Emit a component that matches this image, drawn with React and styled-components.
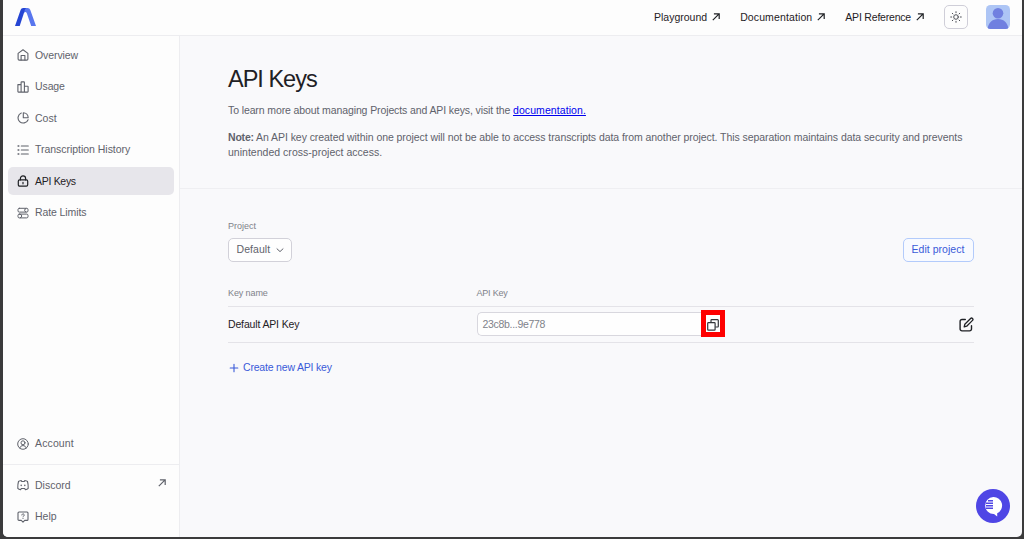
import React from "react";
import styled, { createGlobalStyle } from "styled-components";

const Global = createGlobalStyle`
  *, *::before, *::after { box-sizing: border-box; }
  html, body, #root { height: 100%; }
  body {
    margin: 0;
    overflow: hidden;
    background: #3b3b3c;
    font-family: "Liberation Sans", Arial, sans-serif;
    font-size: 10.5px;
    color: #1f2125;
  }
`;

const Window = styled.div`
  width: 1019.5px;
  height: 537px;
  margin-left: 2.5px;
  display: flex;
  flex-direction: column;
  background: #f9f9fb;
  border-radius: 0 0 5px 5px;
  overflow: hidden;
`;

const Header = styled.header`
  flex: none;
  height: 36px;
  padding: 0 12px 1px 12px;
  display: flex;
  align-items: center;
  background: #fdfdfd;
  border-bottom: 1px solid #ededf0;
`;

const HeaderNav = styled.nav`
  margin-left: auto;
  display: flex;
  align-items: center;
  gap: 20px;
`;

const HeaderLink = styled.a`
  display: flex;
  align-items: center;
  gap: 5px;
  white-space: nowrap;
  letter-spacing: ${(p) => p.$track || 0}px;
  color: #1f2125;
`;

const ThemeButton = styled.button`
  width: 24px;
  height: 24px;
  margin-left: 20px;
  padding: 0;
  display: grid;
  place-items: center;
  background: #fdfdfd;
  border: 1px solid #cfced8;
  border-radius: 5px;
`;

const Avatar = styled.div`
  width: 24px;
  height: 24px;
  margin-left: 18px;
  border-radius: 4.5px;
  overflow: hidden;
  background: #adc5f5;
  svg { display: block; }
`;

const Body = styled.div`
  flex: 1;
  min-height: 0;
  display: flex;
`;

const Sidebar = styled.aside`
  flex: none;
  width: 177.5px;
  display: flex;
  flex-direction: column;
  background: #fdfdfd;
  border-right: 1px solid #ededf0;
`;

const NavGroup = styled.div`
  display: flex;
  flex-direction: column;
  gap: 3.5px;
  padding: ${(p) => p.$pad};
  border-top: ${(p) => (p.$divided ? "1px solid #ededf0" : "0")};
`;

const Spacer = styled.div`
  flex: 1;
`;

const NavItem = styled.a`
  height: 28px;
  padding: 0 8px 1px 8.5px;
  display: flex;
  align-items: center;
  border-radius: 5px;
  white-space: nowrap;
  letter-spacing: ${(p) => p.$track || 0}px;
  color: ${(p) => (p.$active ? "#1f2125" : "#5f626b")};
  background: ${(p) => (p.$active ? "#e7e6eb" : "transparent")};
  > svg:first-child { flex: none; margin: 1px 6.5px 0 0; }
  > svg:last-child { margin-left: auto; margin-bottom: 4px; }
`;

const Main = styled.main`
  flex: 1;
  min-width: 0;
`;

const Intro = styled.section`
  height: 153px;
  padding: 28px 48px 0;
  border-bottom: 1px solid #efeff2;
`;

const Title = styled.h1`
  margin: 0;
  font-size: 23.5px;
  line-height: 30px;
  font-weight: 400;
  letter-spacing: -1px;
`;

const Para = styled.p`
  margin: ${(p) => p.$top}px 0 0;
  line-height: 15px;
  white-space: nowrap;
  color: #5f626b;
`;

const Run = styled.span`
  letter-spacing: ${(p) => p.$track}px;
`;

const DocLink = styled.a`
  color: #0000ee;
  text-decoration: underline;
  letter-spacing: ${(p) => p.$track}px;
`;

const Content = styled.section`
  padding: 31px 48px 0;
`;

const Label = styled.div`
  font-size: 9px;
  line-height: 12px;
  color: #80828a;
  letter-spacing: ${(p) => p.$track || 0}px;
`;

const ProjectRow = styled.div`
  margin-top: 5.5px;
  display: flex;
  justify-content: space-between;
`;

const Button = styled.button`
  height: 24.5px;
  width: ${(p) => p.$w}px;
  padding: 0 7.5px 1px;
  display: flex;
  align-items: center;
  justify-content: space-between;
  white-space: nowrap;
  font: inherit;
  letter-spacing: ${(p) => p.$track || 0}px;
  border-radius: 5px;
  border: 1px solid ${(p) => (p.$primary ? "#b3cbfb" : "#d2d1d9")};
  background: ${(p) => (p.$primary ? "#f8faff" : "#fefefe")};
  color: ${(p) => (p.$primary ? "#3a5bd9" : "#5f626b")};
  svg { margin-top: 2px; }
`;

const TableRow = styled.div`
  display: grid;
  grid-template-columns: 248.5px 1fr auto;
  align-items: ${(p) => (p.$head ? "end" : "center")};
  height: ${(p) => p.$h}px;
  padding-bottom: ${(p) => (p.$head ? 6.6 : 0)}px;
  border-bottom: 1px solid #e4e3e8;
`;

const KeyName = styled.span`
  letter-spacing: ${(p) => p.$track}px;
`;

const KeyCell = styled.div`
  display: flex;
  align-items: center;
`;

const KeyField = styled.div`
  width: 225px;
  height: 24px;
  padding-left: 5px;
  display: flex;
  align-items: center;
  background: #fefefe;
  border: 1px solid #d8d7de;
  border-right: 0;
  border-radius: 5px 0 0 5px;
  color: #80828a;
  letter-spacing: ${(p) => p.$track}px;
`;

const CopyButton = styled.button`
  width: 24px;
  height: 27px;
  margin: -1px 0 0 -1px;
  padding: 2px 0 0 1px;
  display: grid;
  place-items: center;
  border: 5px solid #fe0000;
  background: #fefefe;
`;

const Create = styled.button`
  margin-top: 16.5px;
  padding: 0 0 0 1px;
  height: 16px;
  display: flex;
  align-items: center;
  gap: 4px;
  border: 0;
  background: none;
  font: inherit;
  color: #3a5bd9;
  letter-spacing: ${(p) => p.$track}px;
  svg { margin-top: 1px; }
`;

const Chat = styled.button`
  position: absolute;
  left: 976px;
  top: 489px;
  width: 34px;
  height: 34px;
  padding: 0;
  border: 0;
  border-radius: 50%;
  background: #4f46e5;
  svg { display: block; }
`;

const Icon = ({ size = 12, w = 1.1, children, box = 12 }) => (
  <svg width={size} height={size} viewBox={`0 0 ${box} ${box}`} fill="none" stroke="currentColor" strokeWidth={w} strokeLinecap="round" strokeLinejoin="round">
    {children}
  </svg>
);

const icons = {
  home: <Icon><path d="M1.1 4.400 6 .8l4.900 3.600v5.500a1.200 1.200 0 0 1-1.200 1.200H2.300a1.200 1.200 0 0 1-1.200-1.200Z" /><path d="M4.100 11V6.500h3.800V11" /></Icon>,
  chart: <Icon><path d="M.9 3.6h3.2v7.500H1.4a.5.5 0 0 1-.5-.5ZM4.100 11.100V1.400a.5.5 0 0 1 .5-.5h2.300a.5.5 0 0 1 .5.5v9.700ZM7.400 5.200h3.200a.5.5 0 0 1 .5.5v4.900a.5.5 0 0 1-.5.5H7.400Z" /></Icon>,
  pie: <Icon><path d="M4.3 1a5.2 5.2 0 1 0 6.8 6.700" /><path d="M6.300.8v4.900h4.900A5 5 0 0 0 6.300.8Z" /></Icon>,
  list: <Icon><path d="M4.300 2h7M4.300 6h7M4.300 10h7" /><path d="M1.100 2h.7M1.100 6h.7M1.100 10h.7" strokeWidth="1.5" /></Icon>,
  lock: <Icon w={1.2}><rect x="1.3" y="4.9" width="9.4" height="6.2" rx="1.3" /><path d="M3.400 4.900V3.400a2.600 2.600 0 0 1 5.200 0v1.500M6 7.300v1.500" /></Icon>,
  limits: <Icon w={1}><rect x="1" y="1.3" width="10" height="3.8" rx="1.3" /><path d="M9 1.500a1.800 1.800 0 0 0 0 3.500" /><rect x="1" y="7.1" width="10" height="3.8" rx="1.3" /><path d="M3.300 7.200a1.850 1.850 0 0 1 0 3.600" /></Icon>,
  user: <Icon w={1}><circle cx="6" cy="6" r="5.3" /><circle cx="6" cy="4.8" r="2" /><path d="M2.800 10c.5-1.700 1.700-2.400 3.200-2.400S8.700 8.300 9.200 10" /></Icon>,
  discord: <Icon><path d="M4.200 1.500C3 1.600 2 2 1.500 2.500.9 4.500.7 7 .8 9.300c.7.8 1.700 1.300 2.800 1.500l.7-1.300h3.400l.7 1.300c1.100-.2 2.100-.7 2.800-1.500.1-2.300-.1-4.800-.7-6.800C10 2 9 1.600 7.800 1.500l-.5 1H4.700Z" /><path d="M4.200 6.100v.5M7.800 6.100v.5" strokeWidth="1.4" /></Icon>,
  help: <Icon><path d="M2 1h8a1 1 0 0 1 1 1v6.400a1 1 0 0 1-1 1H7.700L6 11.100 4.300 9.400H2a1 1 0 0 1-1-1V2a1 1 0 0 1 1-1Z" /><path d="M4.800 4a1.200 1.200 0 1 1 1.900 1c-.5.3-.7.5-.7.9M6 7.400v.1" strokeWidth="1" /></Icon>,
  arrow: <Icon size={8} box={8} w={1.2}><path d="M.8 7.200 7.100.9M1.900.8h5.300v5.300" strokeLinecap="butt" strokeLinejoin="miter" /></Icon>,
};

const mainNav = [
  ["home", "Overview", -0.08],
  ["chart", "Usage", -0.1],
  ["pie", "Cost", 0],
  ["list", "Transcription History", -0.03],
  ["lock", "API Keys", -0.3],
  ["limits", "Rate Limits", -0.1],
];

const headerLinks = [
  ["Playground", 0],
  ["Documentation", 0.12],
  ["API Reference", -0.2],
];

export default function App() {
  return (
    <>
      <Global />
      <Window>
        <Header>
          <svg width="21" height="18" viewBox="0 0 21 18">
            <path d="M8 0h4.500c1.500 0 2.300.8 2.800 2L21 18h-4.800L11.800 5.200C11.200 3.600 9.800 3.400 8.900 5Z" fill="#5876ee" />
            <path d="M8.300 0h3C9.800.6 9.500 3 9.100 4.400L4.700 18H0L5.600 2C6.100.8 6.800 0 8.300 0Z" fill="#2545d3" />
          </svg>
          <HeaderNav>
            {headerLinks.map(([label, track]) => (
              <HeaderLink key={label} $track={track}>{label}{icons.arrow}</HeaderLink>
            ))}
          </HeaderNav>
          <ThemeButton aria-label="Theme">
            <svg width="12" height="12" viewBox="0 0 12 12" fill="none" stroke="#4f5158" strokeWidth="1" strokeLinecap="round">
              <circle cx="6" cy="6" r="2.3" />
              <path d="M6 .7v1M6 10.300v1M.7 6h1M10.300 6h1M2.250 2.250l.7.700M9.050 9.050l.7.700M2.250 9.750l.7-.7M9.050 2.950l.7-.7" />
            </svg>
          </ThemeButton>
          <Avatar>
            <svg width="24" height="24" viewBox="0 0 24 24" fill="#7080e0">
              <circle cx="12" cy="8.3" r="5.3" />
              <path d="M1.700 24c.3-6 4.500-10 10.300-10s10 4 10.300 10Z" />
            </svg>
          </Avatar>
        </Header>
        <Body>
          <Sidebar>
            <NavGroup $pad="5px 5.5px 0">
              {mainNav.map(([icon, label, track]) => (
                <NavItem key={label} $track={track} $active={icon === "lock"}>{icons[icon]}<span>{label}</span></NavItem>
              ))}
            </NavGroup>
            <Spacer />
            <NavGroup $pad="0 5.5px 6.5px">
              <NavItem $track={0.13}>{icons.user}<span>Account</span></NavItem>
            </NavGroup>
            <NavGroup $divided $pad="6px 5.5px 6.5px">
              <NavItem $track={0}>{icons.discord}<span>Discord</span>{icons.arrow}</NavItem>
              <NavItem $track={0}>{icons.help}<span>Help</span></NavItem>
            </NavGroup>
          </Sidebar>
          <Main>
            <Intro>
              <Title>API Keys</Title>
              <Para $top={9}>
                <Run $track={-0.11}>To learn more about managing Projects and API keys, visit the </Run>
                <DocLink $track={0.08}>documentation.</DocLink>
              </Para>
              <Para $top={12}>
                <Run as="b" $track={-0.2}>Note:</Run>
                <Run $track={-0.066}> An API key created within one project will not be able to access transcripts data from another project. This separation maintains data security and prevents</Run>
                <br />
                <Run $track={0.02}>unintended cross-project access.</Run>
              </Para>
            </Intro>
            <Content>
              <Label>Project</Label>
              <ProjectRow>
                <Button $w={64} $track={0.05}>
                  <span>Default</span>
                  <Icon size={8} box={8} w={1}><path d="M1 2.800 4 5.600 7 2.800" /></Icon>
                </Button>
                <Button $w={71} $primary $track={0.03}>Edit project</Button>
              </ProjectRow>
              <TableRow $head $h={44.5}>
                <Label $track={-0.1}>Key name</Label>
                <Label $track={-0.2}>API Key</Label>
              </TableRow>
              <TableRow $h={36}>
                <KeyName $track={-0.15}>Default API Key</KeyName>
                <KeyCell>
                  <KeyField $track={-0.3}>23c8b...9e778</KeyField>
                  <CopyButton aria-label="Copy">
                    <svg width="12" height="12" viewBox="0 0 12 12" fill="none" stroke="#33353a" strokeWidth="1.2" strokeLinejoin="round">
                      <rect x=".7" y="3.7" width="7.4" height="7.4" rx=".7" />
                      <path d="M4 3.500V1.400a.7.7 0 0 1 .7-.7h5.900a.7.7 0 0 1 .7.7v5.900a.7.7 0 0 1-.7.7H8.300" />
                    </svg>
                  </CopyButton>
                </KeyCell>
                <svg width="15" height="15" viewBox="0 0 15 15" fill="none" stroke="#1f2125" strokeWidth="1.4" strokeLinecap="round" strokeLinejoin="round">
                  <path d="M6.300 2.500H3A1.900 1.900 0 0 0 1.100 4.400v7.600A1.900 1.900 0 0 0 3 13.900h7.600a1.900 1.900 0 0 0 1.900-1.900V8.700" />
                  <path d="m5.200 9.800.6-2.500 5.800-5.800a1.300 1.300 0 0 1 1.900 1.900L7.700 9.200Z" strokeWidth="1.3" />
                </svg>
              </TableRow>
              <Create $track={-0.19}>
                <Icon size={10} box={10}><path d="M5 1.200v7.600M1.200 5h7.600" /></Icon>
                <span>Create new API key</span>
              </Create>
            </Content>
          </Main>
        </Body>
      </Window>
      <Chat aria-label="Chat">
        <svg width="34" height="34" viewBox="0 0 34 34">
          <path d="M17.300 8a8.500 8.500 0 1 0 .7 17l3.200 2.500v-3.300A8.500 8.500 0 0 0 17.300 8Z" fill="#fff" />
          <path d="M12 11.700h5M10 14.200h7M10 16.700h7M10 19.200h7" stroke="#4f46e5" strokeWidth="1.400" />
        </svg>
      </Chat>
    </>
  );
}
